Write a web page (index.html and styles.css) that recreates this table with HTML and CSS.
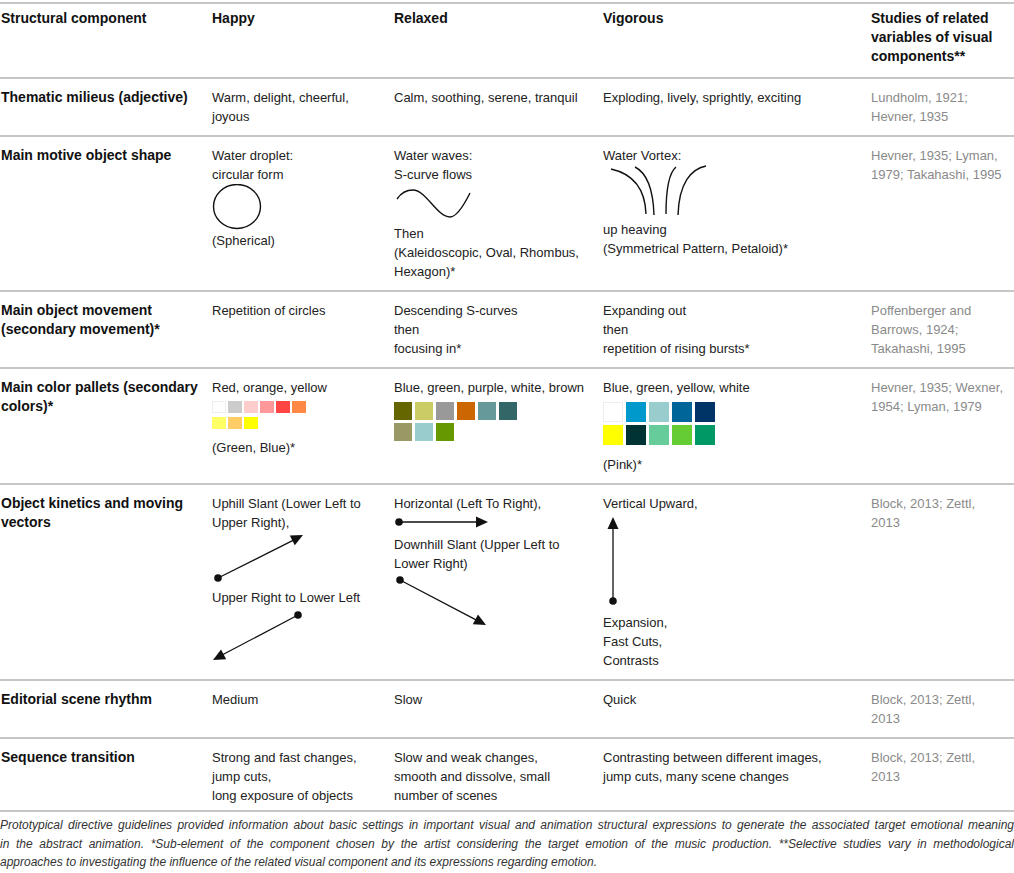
FILE: index.html
```html
<!DOCTYPE html>
<html lang="en">
<head>
    <meta charset="UTF-8">
    <meta name="viewport" content="width=device-width, initial-scale=1.0">
    <title>Animation structural components</title>
    <link rel="stylesheet" href="styles.css">
</head>
<body>
    <table class="guide">
        <colgroup>
            <col class="col-comp">
            <col class="col-happy">
            <col class="col-relaxed">
            <col class="col-vigorous">
            <col class="col-studies">
        </colgroup>
        <thead>
            <tr>
                <th>Structural component</th>
                <th>Happy</th>
                <th>Relaxed</th>
                <th>Vigorous</th>
                <th>Studies of related<br>variables of visual<br>components**</th>
            </tr>
        </thead>
        <tbody>
            <tr>
                <th>Thematic milieus (adjective)</th>
                <td>Warm, delight, cheerful,<br>joyous</td>
                <td>Calm, soothing, serene, tranquil</td>
                <td>Exploding, lively, sprightly, exciting</td>
                <td class="cite">Lundholm, 1921;<br>Hevner, 1935</td>
            </tr>
            <tr>
                <th>Main motive object shape</th>
                <td>
                    Water droplet:<br>circular form
                    <svg class="fig" width="52" height="47" viewBox="0 0 52 47">
                        <ellipse cx="25" cy="22.5" rx="23.5" ry="22" fill="none" stroke="#111" stroke-width="1.4"/>
                    </svg>
                    (Spherical)
                </td>
                <td>
                    Water waves:<br>S-curve flows
                    <svg class="fig fig-wave" width="78" height="40" viewBox="0 0 78 40">
                        <path d="M1 15 C5 9, 11 6, 17 6 C30 6, 41 33, 54 33 C61 33, 68 21, 74 9" fill="none" stroke="#111" stroke-width="1.4"/>
                    </svg>
                    Then<br>(Kaleidoscopic, Oval, Rhombus,<br>Hexagon)*
                </td>
                <td>
                    Water Vortex:
                    <svg class="fig" width="110" height="55" viewBox="0 0 110 55">
                        <g fill="none" stroke="#111" stroke-width="1.4">
                            <path d="M8 4 C26 8, 42 20, 43 49"/>
                            <path d="M32 2 C42 7, 50 20, 51 50"/>
                            <path d="M73 2 C67 7, 63 20, 63 49"/>
                            <path d="M103 1 C88 4, 76 18, 75 50"/>
                        </g>
                    </svg>
                    up heaving<br>(Symmetrical Pattern, Petaloid)*
                </td>
                <td class="cite">Hevner, 1935; Lyman,<br>1979; Takahashi, 1995</td>
            </tr>
            <tr>
                <th>Main object movement<br>(secondary movement)*</th>
                <td>Repetition of circles</td>
                <td>Descending S-curves<br>then<br>focusing in*</td>
                <td>Expanding out<br>then<br>repetition of rising bursts*</td>
                <td class="cite">Poffenberger and<br>Barrows, 1924;<br>Takahashi, 1995</td>
            </tr>
            <tr>
                <th>Main color pallets (secondary<br>colors)*</th>
                <td>
                    Red, orange, yellow
                    <div class="swatches sw-small">
                        <span class="sw sw-white"></span>
                        <span class="sw" style="background:#cccccc"></span>
                        <span class="sw" style="background:#ffcccc"></span>
                        <span class="sw" style="background:#ff9999"></span>
                        <span class="sw" style="background:#ff4444"></span>
                        <span class="sw" style="background:#ff8844"></span>
                        <span class="sw" style="background:#ffff66"></span>
                        <span class="sw" style="background:#ffcc66"></span>
                        <span class="sw" style="background:#ffff00"></span>
                    </div>
                    (Green, Blue)*
                </td>
                <td>
                    Blue, green, purple, white, brown
                    <div class="swatches sw-mid">
                        <span class="sw" style="background:#666600"></span>
                        <span class="sw" style="background:#cccc66"></span>
                        <span class="sw" style="background:#999999"></span>
                        <span class="sw" style="background:#cc6600"></span>
                        <span class="sw" style="background:#669999"></span>
                        <span class="sw" style="background:#336666"></span>
                        <span class="sw" style="background:#999966"></span>
                        <span class="sw" style="background:#99cccc"></span>
                        <span class="sw" style="background:#669900"></span>
                    </div>
                </td>
                <td>
                    Blue, green, yellow, white
                    <div class="swatches sw-big">
                        <span class="sw sw-white"></span>
                        <span class="sw" style="background:#0099cc"></span>
                        <span class="sw" style="background:#99cccc"></span>
                        <span class="sw" style="background:#006699"></span>
                        <span class="sw" style="background:#003366"></span>
                        <span class="sw" style="background:#ffff00"></span>
                        <span class="sw" style="background:#003333"></span>
                        <span class="sw" style="background:#66cc99"></span>
                        <span class="sw" style="background:#66cc33"></span>
                        <span class="sw" style="background:#009966"></span>
                    </div>
                    (Pink)*
                </td>
                <td class="cite">Hevner, 1935; Wexner,<br>1954; Lyman, 1979</td>
            </tr>
            <tr>
                <th>Object kinetics and moving<br>vectors</th>
                <td>
                    Uphill Slant (Lower Left to<br>Upper Right),
                    <svg class="fig" width="100" height="56" viewBox="0 0 100 56">
                        <line x1="6" y1="46" x2="81" y2="8.4" stroke="#111" stroke-width="1.3"/>
                        <circle cx="6" cy="46" r="3.8" fill="#111"/>
                        <polygon points="91,3 82.8,13.3 77.8,3.5" fill="#111"/>
                    </svg>
                    Upper Right to Lower Left
                    <svg class="fig" width="100" height="56" viewBox="0 0 100 56">
                        <line x1="86" y1="8" x2="11" y2="47.5" stroke="#111" stroke-width="1.3"/>
                        <circle cx="86" cy="8" r="3.8" fill="#111"/>
                        <polygon points="1,53 14.2,52.3 9,42.5" fill="#111"/>
                    </svg>
                </td>
                <td>
                    Horizontal (Left To Right),
                    <svg class="fig" width="100" height="22" viewBox="0 0 100 22">
                        <line x1="5" y1="9" x2="83" y2="9" stroke="#111" stroke-width="1.3"/>
                        <circle cx="5" cy="9" r="3.8" fill="#111"/>
                        <polygon points="94,9 82,3.5 82,14.5" fill="#111"/>
                    </svg>
                    Downhill Slant (Upper Left to<br>Lower Right)
                    <svg class="fig" width="100" height="56" viewBox="0 0 100 56">
                        <line x1="6" y1="7" x2="82" y2="46.8" stroke="#111" stroke-width="1.3"/>
                        <circle cx="6" cy="7" r="3.8" fill="#111"/>
                        <polygon points="92,52 78.8,51.3 84,41.5" fill="#111"/>
                    </svg>
                </td>
                <td>
                    Vertical Upward,
                    <svg class="fig" width="24" height="100" viewBox="0 0 24 100">
                        <line x1="10" y1="15" x2="10" y2="88" stroke="#111" stroke-width="1.3"/>
                        <circle cx="10" cy="88" r="3.8" fill="#111"/>
                        <polygon points="10,4 4.5,16 15.5,16" fill="#111"/>
                    </svg>
                    Expansion,<br>Fast Cuts,<br>Contrasts
                </td>
                <td class="cite">Block, 2013; Zettl,<br>2013</td>
            </tr>
            <tr>
                <th>Editorial scene rhythm</th>
                <td>Medium</td>
                <td>Slow</td>
                <td>Quick</td>
                <td class="cite">Block, 2013; Zettl,<br>2013</td>
            </tr>
            <tr class="row-last">
                <th>Sequence transition</th>
                <td>Strong and fast changes,<br>jump cuts,<br>long exposure of objects</td>
                <td>Slow and weak changes,<br>smooth and dissolve, small<br>number of scenes</td>
                <td>Contrasting between different images,<br>jump cuts, many scene changes</td>
                <td class="cite">Block, 2013; Zettl,<br>2013</td>
            </tr>
        </tbody>
    </table>
    <p class="note">
        <span class="note-line">Prototypical directive guidelines provided information about basic settings in important visual and animation structural expressions to generate the associated target emotional meaning</span>
        <span class="note-line">in the abstract animation. *Sub-element of the component chosen by the artist considering the target emotion of the music production. **Selective studies vary in methodological</span>
        approaches to investigating the influence of the related visual component and its expressions regarding emotion.
    </p>
</body>
</html>
```

FILE: styles.css
```css
body{
    margin: 0;
    font-family: "Liberation Sans", Arial, Helvetica, sans-serif;
    color: #222;
    background: #fff;
}
.guide{
    width: 1014px;
    margin-top: 2px;
    border-collapse: collapse;
    table-layout: fixed;
    font-size: 13px;
    line-height: 19px;
}
.col-comp{width: 212px;}
.col-happy{width: 182px;}
.col-relaxed{width: 209px;}
.col-vigorous{width: 268px;}
.col-studies{width: 143px;}

.guide th, .guide td{
    text-align: left;
    vertical-align: top;
    padding: 9px 6px 9px 0;
    border-top: 2px solid #c6c6c6;
    border-bottom: 2px solid #c6c6c6;
}
.guide th{
    font-size: 14px;
    font-weight: bold;
    color: #111;
}
.guide tr > th:first-child{padding-left: 1px;}
.guide thead th{
    padding-top: 5px;
    padding-bottom: 11px;
}
.guide .row-last th, .guide .row-last td{padding-bottom: 5px;}
.guide .cite{color: #8a8a8a;}

/* drawings inside the cells */
.fig{display: block;}
.fig-wave{margin-left: 2px;}

/* colour pallets */
.swatches{display: grid;}
.sw{display: block; background: #fff;}
.sw-white{box-shadow: inset 0 0 0 1px #eee;}
.sw-small{
    grid-template-columns: repeat(6, 14px);
    grid-auto-rows: 12px;
    gap: 4px 2px;
    margin: 4px 0 9px;
}
.sw-mid{
    grid-template-columns: repeat(6, 18px);
    grid-auto-rows: 18px;
    gap: 3px;
    margin: 5px 0 10px;
}
.sw-big{
    grid-template-columns: repeat(5, 20px);
    grid-auto-rows: 20px;
    gap: 3px;
    margin: 5px 0 10px;
}

.note{
    margin: 0;
    padding-top: 4px;
    font-size: 12px;
    line-height: 18.5px;
    font-style: italic;
    color: #333;
}
.note-line{
    display: block;
    text-align: justify;
    text-align-last: justify;
}
```
